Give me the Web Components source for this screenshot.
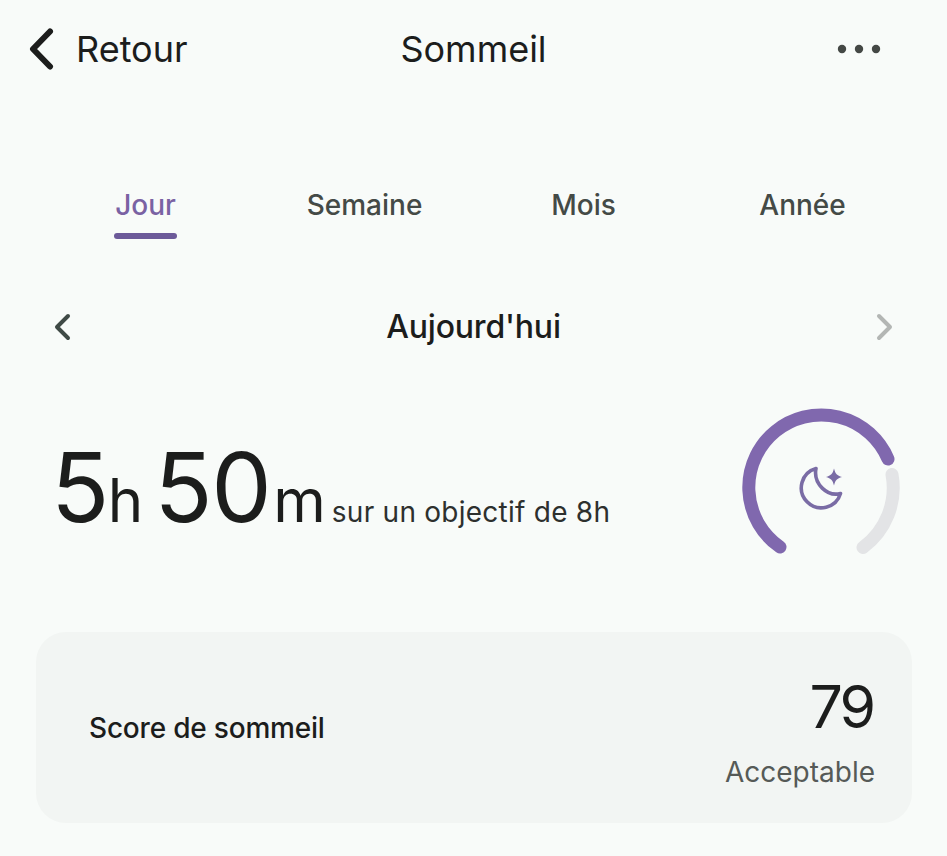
<!DOCTYPE html>
<html lang="fr">
<head>
<meta charset="utf-8">
<title>Sommeil</title>
<style>
  html, body { margin: 0; height: 100%; background: #f8fbf9; }
  body { font-family: 'Inter', 'Liberation Sans', sans-serif; color: #1c1d1c; overflow: hidden; }
</style>
</head>
<body>
<sleep-screen>
  <app-header title="Sommeil" back="Retour"></app-header>
  <tab-bar tabs="Jour,Semaine,Mois,Année" active="0"></tab-bar>
  <day-nav label="Aujourd'hui"></day-nav>
  <sleep-summary goal="sur un objectif de 8h"></sleep-summary>
  <score-card label="Score de sommeil" score="79" rating="Acceptable"></score-card>
</sleep-screen>

<script>
class SleepScreen extends HTMLElement {
    constructor() {
        super();
        this.attachShadow({ mode: 'open' });
        this.shadowRoot.innerHTML = `
          <style>
            :host { display: flex; flex-direction: column; width: 947px; height: 856px; }
          </style>
          <slot></slot>`;
    }
}

class AppHeader extends HTMLElement {
    constructor() {
        super();
        this.attachShadow({ mode: 'open' });
        this.shadowRoot.innerHTML = `
          <style>
            :host { display: grid; grid-template-columns: 1fr auto 1fr; align-items: center; height: 98px; padding: 0 66px 0 28px; }
            .back { display: flex; align-items: center; gap: 21px; font-size: 36px; }
            .title { font-size: 36px; margin-left: 38px; }
            svg { display: block; }
            .more { justify-self: end; }
          </style>
          <div class="back">
            <svg width="27" height="42" viewBox="0 0 27 42"><path d="M22 3.5 5 21l17 17.5" fill="none" stroke="#1c1d1c" stroke-width="6" stroke-linecap="round" stroke-linejoin="round"/></svg>
            <span>${this.getAttribute('back')}</span>
          </div>
          <div class="title">${this.getAttribute('title')}</div>
          <svg class="more" width="44" height="10" viewBox="0 0 44 10" fill="#444845"><circle cx="5" cy="5" r="4.2"/><circle cx="22" cy="5" r="4.2"/><circle cx="39" cy="5" r="4.2"/></svg>`;
    }
}

class TabBar extends HTMLElement {
    constructor() {
        super();
        this.attachShadow({ mode: 'open' });
        const active = Number(this.getAttribute('active'));
        const tabs = this.getAttribute('tabs').split(',').map((t, i) => `
          <div class="tab ${i === active ? 'on' : ''}"><span class="label">${t}</span></div>`).join('');
        this.shadowRoot.innerHTML = `
          <style>
            :host { display: grid; grid-template-columns: repeat(4, 219px); padding: 87px 0 0 36px; height: 54px; }
            .tab { display: flex; justify-content: center; font-size: 28px; font-weight: 450; color: #444a46; }
            .label { display: flex; flex-direction: column; height: 54px; line-height: 40px; }
            .on { color: #7a62a3; }
            .on .label::after { content: ''; height: 6px; margin: auto -1px 0; border-radius: 3px; background: #6c5a99; }
          </style>
          ${tabs}`;
    }
}

class DayNav extends HTMLElement {
    constructor() {
        super();
        this.attachShadow({ mode: 'open' });
        this.shadowRoot.innerHTML = `
          <style>
            :host { display: flex; justify-content: space-between; align-items: center; margin-top: 62px; height: 50px; padding: 0 52px; }
            .label { font-size: 32px; font-weight: 500; letter-spacing: -.2px; color: #1c1d1c; }
            svg { display: block; margin-top: 2px; }
          </style>
          <svg width="22" height="28" viewBox="0 0 22 28"><path d="M16 3 5 14l11 11" fill="none" stroke="#3f4a46" stroke-width="4" stroke-linecap="round" stroke-linejoin="round"/></svg>
          <div class="label">${this.getAttribute('label')}</div>
          <svg width="22" height="28" viewBox="0 0 22 28"><path d="M6 3l11 11L6 25" fill="none" stroke="#b3b6b4" stroke-width="4" stroke-linecap="round" stroke-linejoin="round"/></svg>`;
    }
}

class SleepGauge extends HTMLElement {
    constructor() {
        super();
        this.attachShadow({ mode: 'open' });
        this.shadowRoot.innerHTML = `
          <style>
            :host { display: block; width: 162px; height: 150px; }
            svg { display: block; overflow: visible; }
          </style>
          <svg width="162" height="150" viewBox="0 0 162 150">
            <g fill="none" stroke-width="13" stroke-linecap="round">
              <path d="M153 66.5A74 74 0 0 1 124 139.5" stroke="#e3e4e6"/>
              <path d="M41 139A72.5 72.5 0 1 1 149 51" stroke="#8068ae"/>
            </g>
            <path d="M77 60.5a20 20 0 1 0 24.5 25c-13 3.5-27.5-9.5-24.5-25z" fill="none" stroke="#7a6ca5" stroke-width="3.6" stroke-linejoin="round"/>
            <path d="M95 60.5c1.400 5.400 3 7 8 8.500-5 1.500-6.600 3.100-8 8.500-1.400-5.400-3-7-8-8.500 5-1.500 6.600-3.100 8-8.500z" fill="#7a6ca5"/>
          </svg>`;
    }
}

class SleepSummary extends HTMLElement {
    constructor() {
        super();
        this.attachShadow({ mode: 'open' });
        this.shadowRoot.innerHTML = `
          <style>
            :host { display: flex; justify-content: space-between; align-items: center; margin-top: 57px; height: 150px; padding: 0 46px 0 51px; }
            .value { display: flex; align-items: baseline; white-space: nowrap; color: #1c1d1c; margin-top: 8px; }
            .big { font-size: 96px; letter-spacing: -1.5px; }
            .unit { font-size: 60px; margin-right: 12px; letter-spacing: -1px; }
            .unit.last { margin: 0 7px 0 3px; }
            .goal { font-size: 28px; letter-spacing: .25px; color: #2d302e; }
          </style>
          <div class="value">
            <span class="big">5</span><span class="unit">h</span><span class="big">50</span><span class="unit last">m</span><span class="goal">${this.getAttribute('goal')}</span>
          </div>
          <sleep-gauge></sleep-gauge>`;
    }
}

class ScoreCard extends HTMLElement {
    constructor() {
        super();
        this.attachShadow({ mode: 'open' });
        this.shadowRoot.innerHTML = `
          <style>
            :host { display: flex; justify-content: space-between; align-items: center; margin: 74px 35px 0 36px; height: 191px; padding: 0 37px 0 53px; box-sizing: border-box; background: #f2f5f3; border-radius: 30px; }
            .label { font-size: 28px; font-weight: 500; letter-spacing: -.2px; color: #1c1d1c; }
            .right { display: flex; flex-direction: column; align-items: flex-end; padding-top: 9px; }
            .score { font-size: 59px; line-height: 68px; letter-spacing: -3px; margin-right: 2px; color: #1c1d1c; }
            .rating { font-size: 28px; line-height: 40px; margin-top: 11px; color: #565a57; }
          </style>
          <div class="label">${this.getAttribute('label')}</div>
          <div class="right">
            <div class="score">${this.getAttribute('score')}</div>
            <div class="rating">${this.getAttribute('rating')}</div>
          </div>`;
    }
}

customElements.define('sleep-screen', SleepScreen);
customElements.define('app-header', AppHeader);
customElements.define('tab-bar', TabBar);
customElements.define('day-nav', DayNav);
customElements.define('sleep-gauge', SleepGauge);
customElements.define('sleep-summary', SleepSummary);
customElements.define('score-card', ScoreCard);
</script>
</body>
</html>
